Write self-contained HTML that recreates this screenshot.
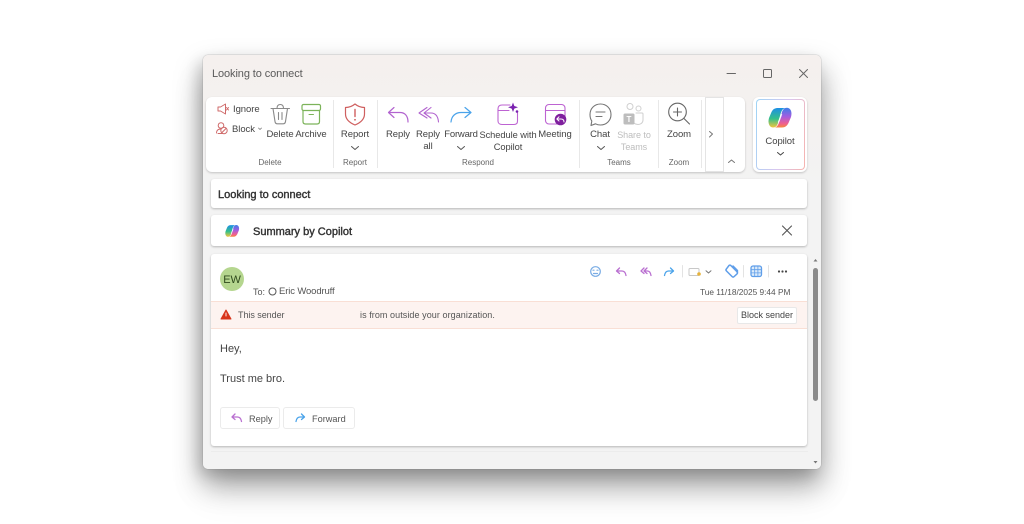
<!DOCTYPE html>
<html><head><meta charset="utf-8"><style>
html,body{margin:0;padding:0;background:#fff}
#p{position:relative;width:1024px;height:524px;overflow:hidden;background:#fff;font-family:"Liberation Sans",sans-serif;color:#3b3b3b;filter:blur(.3px)}
#p div{position:absolute}
.t{white-space:nowrap;font-size:9.5px;line-height:12px;letter-spacing:-.06px;text-align:center;transform:translateX(-50%);color:#444}
.l{white-space:nowrap;color:#444}
.g{white-space:nowrap;font-size:8px;line-height:10px;text-align:center;transform:translateX(-50%);color:#666}
.card{background:#fff;border-radius:3px;box-shadow:0 1px 2px rgba(0,0,0,.25)}
.d{width:1px;background:#e8e8e8;top:100px;height:68px}
.b{font-size:11px;line-height:14px;color:#333;-webkit-text-stroke:.4px #333}
svg{position:absolute;left:0;top:0}
</style></head><body><div id="p">
<div style="left:203px;top:55px;width:618px;height:414px;border-radius:5px;background:linear-gradient(#f5f0ee 0,#f4f1ef 40px,#f3f3f3 130px);box-shadow:0 0 1px #777,0 14px 28px rgba(0,0,0,.34),0 24px 34px rgba(0,0,0,.1),-5px 6px 14px rgba(0,0,0,.12)"></div>
<div class="l" style="left:212px;top:67px;font-size:11px;line-height:14px;letter-spacing:-.1px;color:#5a5a5a">Looking to connect</div>

<div style="left:206px;top:97px;width:539px;height:75px;background:#fff;border-radius:6px;box-shadow:0 1px 2px rgba(0,0,0,.2)"></div>
<div style="left:705px;top:97px;width:17px;height:73px;border:1px solid #e4e4e4"></div>
<div class="d" style="left:333px"></div><div class="d" style="left:377px"></div><div class="d" style="left:579px"></div><div class="d" style="left:658px"></div><div class="d" style="left:701px"></div>

<div style="left:753px;top:97px;width:54px;height:75px;background:#fff;border-radius:6px;box-shadow:0 1px 2px rgba(0,0,0,.2)"></div>
<div style="left:756px;top:99px;width:49px;height:71px;border-radius:4px;background:linear-gradient(100deg,#9ed4f5,#d9c6ef 55%,#f7b3ad);"></div>
<div style="left:757px;top:100px;width:47px;height:69px;border-radius:3px;background:#fff"></div>

<div class="card" style="left:211px;top:179px;width:596px;height:29px"></div>
<div class="card" style="left:211px;top:215px;width:596px;height:31px"></div>
<div class="card" style="left:211px;top:254px;width:596px;height:192px"></div>
<div style="left:211px;top:301px;width:596px;height:26px;background:#fdf3f0;border-top:1px solid #f9dfd5;border-bottom:1px solid #f9dfd5"></div>
<div style="left:211px;top:451px;width:597px;height:1px;background:#ececec"></div>

<div class="l" style="left:233px;top:104px;font-size:9.5px;line-height:12px;letter-spacing:-.06px">Ignore</div>
<div class="l" style="left:232px;top:124px;font-size:9.5px;line-height:12px;letter-spacing:-.06px">Block</div>
<div class="t" style="left:280px;top:129px">Delete</div>
<div class="t" style="left:311px;top:129px">Archive</div>
<div class="t" style="left:355px;top:129px">Report</div>
<div class="t" style="left:398px;top:129px">Reply</div>
<div class="t" style="left:428px;top:129px">Reply<br>all</div>
<div class="t" style="left:461px;top:129px;letter-spacing:-.2px">Forward</div>
<div class="t" style="left:508px;top:129px;font-size:9.3px">Schedule with<br>Copilot</div>
<div class="t" style="left:555px;top:129px">Meeting</div>
<div class="t" style="left:600px;top:129px">Chat</div>
<div class="t" style="left:634px;top:129px;color:#bdbdbd;font-size:9px">Share to<br>Teams</div>
<div class="t" style="left:679px;top:129px">Zoom</div>
<div class="t" style="left:780px;top:136px">Copilot</div>
<div class="g" style="left:270px;top:158px">Delete</div>
<div class="g" style="left:355px;top:158px">Report</div>
<div class="g" style="left:478px;top:158px">Respond</div>
<div class="g" style="left:619px;top:158px">Teams</div>
<div class="g" style="left:679px;top:158px">Zoom</div>

<div class="l b" style="left:218px;top:188px">Looking to connect</div>
<div class="l b" style="left:253px;top:225px">Summary by Copilot</div>

<div style="left:220px;top:267px;width:24px;height:24px;border-radius:50%;background:#b5d68f"></div>
<div class="t" style="left:232px;top:274px;font-size:11px;color:#2f4a1d">EW</div>
<div class="l" style="left:253px;top:286px;font-size:9px;line-height:12px;color:#555">To:</div>
<div class="l" style="left:279px;top:286px;font-size:9.5px;line-height:12px;color:#555;letter-spacing:-.13px">Eric Woodruff</div>
<div class="l" style="left:700px;top:286px;font-size:8.3px;line-height:12px;color:#555">Tue 11/18/2025 9:44 PM</div>
<div class="l" style="left:238px;top:309px;font-size:9px;line-height:12px;color:#555;letter-spacing:-.05px">This sender</div>
<div class="l" style="left:360px;top:309px;font-size:9px;line-height:12px;color:#555;letter-spacing:.07px">is from outside your organization.</div>
<div style="left:737px;top:307px;width:58px;height:15px;background:#fff;border:1px solid #e8e8e8;border-radius:2px;font-size:9px;line-height:15px;text-align:center;color:#444">Block sender</div>

<div class="l" style="left:220px;top:342px;font-size:11px;line-height:14px;color:#444">Hey,</div>
<div class="l" style="left:220px;top:372px;font-size:11px;line-height:14px;color:#444">Trust me bro.</div>

<div style="left:220px;top:407px;width:58px;height:20px;background:#fff;border:1px solid #ebebeb;border-radius:3px"></div>
<div style="left:283px;top:407px;width:70px;height:20px;background:#fff;border:1px solid #ebebeb;border-radius:3px"></div>
<div class="l" style="left:249px;top:413px;font-size:9.2px;line-height:12px;color:#555">Reply</div>
<div class="l" style="left:312px;top:413px;font-size:9.2px;line-height:12px;color:#555">Forward</div>

<div style="left:813px;top:268px;width:5px;height:133px;border-radius:3px;background:#8b8b8b"></div>

<svg width="1024" height="524" viewBox="0 0 1024 524" fill="none" stroke-linecap="round" stroke-linejoin="round">
<defs>
<linearGradient id="c1" x1="0" y1="0" x2="0" y2="1"><stop offset="0" stop-color="#1d8fe6"/><stop offset=".55" stop-color="#35c08a"/><stop offset="1" stop-color="#f4c63c"/></linearGradient>
<linearGradient id="c2" x1="0" y1="0" x2="0" y2="1"><stop offset="0" stop-color="#3b7fe8"/><stop offset=".45" stop-color="#a45ce0"/><stop offset=".8" stop-color="#ef5f8f"/><stop offset="1" stop-color="#f58a3a"/></linearGradient>
<g id="cop"><path d="M10 1H17C14 2 13 5 12 9L10 16C9 19 7.500 20.500 5 20.500C1.500 20.500-.5 16 1 11L3.500 5C5 2 7 1 10 1Z" fill="url(#c1)"/><path d="M14 20.500H7C10 19.500 11 16 12 12L14 5C15 2.500 16.500.8 19 .8C22.500.8 24.500 5 23 10L20.500 16C19 19 17 20.500 14 20.500Z" fill="url(#c2)"/><path d="M13.500 7.500C12.500 10 11.500 13 10.500 15" stroke="#fff" stroke-width="1.300" opacity=".85"/></g>
</defs>
<g stroke="#666" stroke-width="1"><path d="M727 73.500H735.500"/><rect x="763.500" y="69.500" width="8" height="8" rx="1"/><path d="M799.500 69.500L807.500 77.500M807.500 69.500L799.500 77.500"/></g>
<g stroke="#cf6a6a" stroke-width="1"><path d="M218 107H220.500L225.500 104V114L220.500 111H218Z"/><path d="M226.500 107.500L228.500 110M228.500 107.500L226.500 110"/></g>
<g stroke="#cf6a6a" stroke-width="1"><circle cx="221" cy="125.500" r="2.800"/><path d="M216.500 133C216.500 130 218.500 129 221 129"/><circle cx="224" cy="130.500" r="3.200"/><path d="M222 132.500L226 128.500"/><path d="M218 133.500H222"/></g>
<path d="M258.500 128L260 129.500L261.500 128" stroke="#777" stroke-width=".8"/>
<g stroke="#8a8a8a" stroke-width="1.100"><path d="M271 108.500H289.500"/><path d="M277 108.500C277 106 278 104.500 280.300 104.500C282.500 104.500 283.500 106 283.500 108.500"/><path d="M273 108.500L275 121.500C275.200 123 276 123.800 277.500 123.800H283C284.500 123.800 285.300 123 285.500 121.500L287.500 108.500"/><path d="M278.500 112.500V119.500M282 112.500V119.500"/></g>
<g stroke="#7cb35a" stroke-width="1.200"><rect x="302" y="104.500" width="18.500" height="6" rx="1.500"/><path d="M303 110.500V121.500C303 123 304 124 305.500 124H317C318.500 124 319.500 123 319.500 121.500V110.500"/><path d="M309 114.500H313.500" stroke-width="1"/></g>
<g stroke="#cf5f5f" stroke-width="1.200"><path d="M355 104C358 106.500 361 107.500 364.500 107.500V114C364.500 119 361 122.500 355 125C349 122.500 345.500 119 345.500 114V107.500C349 107.500 352 106.500 355 104Z"/><path d="M355 109.500V116.500" stroke-width="1.400"/></g><circle cx="355" cy="119.800" r=".9" fill="#cf5f5f"/>
<path d="M351.500 146.500L355 149.500L358.500 146.500" stroke="#555"/>
<g stroke="#b264cf" stroke-width="1.200"><path d="M394 107.500L388.500 112.500L394 117.500"/><path d="M389 112.500H400C405 112.500 408 116 408 122"/></g>
<g stroke="#b264cf" stroke-width="1.100"><path d="M427 107.500L419 113L427 118"/><path d="M431 107.500L424 113L431 118"/><path d="M424.500 113H431C435.500 113 438 116.500 438.500 122"/></g>
<g stroke="#4aa3ea" stroke-width="1.200"><path d="M465 107.500L471 112.500L465 117.500"/><path d="M470.500 112.500H461C455.500 112.500 451.500 116 451 122"/></g>
<path d="M457.500 146.500L461 149.500L464.500 146.500" stroke="#555"/>
<g stroke="#bd63d2" stroke-width="1.100"><path d="M510 105H502C499.500 105 498 106.500 498 109V121C498 123 499.500 124.500 502 124.500H514C516.500 124.500 517.500 123 517.500 121V113"/><path d="M498 110.500H509"/></g>
<path d="M513 102.500L514.300 106L518 107.300L514.300 108.600L513 112L511.700 108.600L508 107.300L511.700 106Z" fill="#7a22b0"/><circle cx="517" cy="111.500" r="1.300" fill="#7a22b0"/>
<g stroke="#bd63d2" stroke-width="1.100"><rect x="545.500" y="104.500" width="19.500" height="19.500" rx="3.500"/><path d="M545.500 110.500H565"/></g>
<circle cx="560.500" cy="119.500" r="5.800" fill="#7f1f9e"/><path d="M559 116.800L556.800 119L559 121M557 119H561C563 119 564 120 564 122" stroke="#fff" stroke-width="1"/>
<g stroke="#777" stroke-width="1.100"><path d="M600.500 104C606.500 104 611 108.500 611 114.500C611 120.500 606.500 125 600.500 125C598.500 125 597 124.600 595.500 123.800L591 125.500L591.800 121C590.500 119.200 590 117 590 114.500C590 108.500 594.500 104 600.500 104Z"/><path d="M596 112H605M596 116.500H602"/></g>
<path d="M597.500 146.500L601 149.500L604.500 146.500" stroke="#555"/>
<g stroke="#cfcfcf" stroke-width="1"><circle cx="630" cy="106.500" r="3"/><circle cx="638.500" cy="108.500" r="2.500"/><path d="M636 113H642C642.800 113 643 113.500 643 114V120C643 123 640.500 124.500 638 124.500C636 124.500 635 124 634 123"/></g>
<rect x="623.500" y="113.500" width="11" height="11" rx="1.500" fill="#bdbdbd"/><text x="629" y="122" font-family="Liberation Sans" font-size="8" font-weight="bold" fill="#fff" text-anchor="middle">T</text>
<g stroke="#666" stroke-width="1.100"><circle cx="677.500" cy="112" r="8.800"/><path d="M684 118.500L689.500 124M677.500 108V116M673.500 112H681.500"/></g>
<path d="M709.500 131.500L712.500 134L709.500 137" stroke="#777"/>
<path d="M728.500 162.500L731.500 160L734.500 162.500" stroke="#777"/>
<use href="#cop" transform="translate(768,107)"/>
<path d="M777.500 152.500L780.500 155L783.500 152.500" stroke="#444"/>
<use href="#cop" transform="translate(225,224.500) scale(.6)"/>
<path d="M782.500 226L791.500 235M791.500 226L782.500 235" stroke="#555" stroke-width="1.100"/>
<circle cx="272.500" cy="291.500" r="3.500" stroke="#555"/>
<path d="M226 310L231 319H221Z" fill="#d8341a" stroke="#d8341a" stroke-width="1"/><path d="M226 313V316" stroke="#fff" stroke-width=".9"/>
<g stroke="#79ace4" stroke-width="1.200"><circle cx="595.500" cy="271.500" r="4.800"/><path d="M593 270.200H594M597 270.200H598M593.500 273.500H597.500"/></g>
<g stroke="#b96fd0" stroke-width="1.300"><path d="M619.500 268L616.500 271L619.500 273.500M617 271H622C624 271 625.500 272.500 626 275.500"/></g>
<g stroke="#b96fd0" stroke-width="1.300"><path d="M644 268L641 271L644 273.500M647 268L644 271L647 273.500M644 271H647.500C649.500 271 650.500 272.500 651 275.500"/></g>
<g stroke="#4aa3ea" stroke-width="1.300"><path d="M670.500 268L673.500 271L670.500 273.500M673 271H668.500C666.500 271 665 272.500 664.500 275.500"/></g>
<path d="M682.500 265.500V277" stroke="#e3e3e3"/>
<rect x="689" y="268.500" width="10" height="7" rx="1" stroke="#c8c8c8"/><circle cx="699" cy="274" r="1.800" fill="#e6b23a"/>
<path d="M706 270.800L708.500 273L711 270.800" stroke="#777"/>
<g stroke="#5f9ee9" stroke-width="1.500"><path d="M729.800 266L736 272.200C736.700 272.900 736.700 273.700 736 274.400L733.200 277C732.500 277.700 731.700 277.700 731 277L725.500 271.500C724.800 270.800 724.800 270 725.500 269.300L728 266C728.600 265.500 729.200 265.500 729.800 266Z" transform="translate(1,-.5)"/><path d="M733 266L737 270C737.800 270.800 737.500 271.500 737 272"/></g>
<path d="M743.500 265.500V277" stroke="#e3e3e3"/>
<rect x="751" y="266" width="10.500" height="10.500" rx="2" stroke="#5f9ee9" stroke-width="1.300" fill="#dcebfa"/><path d="M754.700 266.500V276M757.900 266.500V276M751.500 269.700H761M751.500 272.900H761" stroke="#5f9ee9" stroke-width=".8"/>
<path d="M768.500 265.500V277" stroke="#e3e3e3"/>
<g fill="#444"><circle cx="779" cy="271.500" r="1.100"/><circle cx="782.500" cy="271.500" r="1.100"/><circle cx="786" cy="271.500" r="1.100"/></g>
<g stroke="#b96fd0" stroke-width="1.300"><path d="M235 414L232 417L235 419.500M232.500 417H237.500C239.500 417 241 418.500 241.500 421.500"/></g>
<g stroke="#4aa3ea" stroke-width="1.300"><path d="M301.500 414L304.500 417L301.500 419.500M304 417H300C298 417 296.500 418.500 296 421.500"/></g>
<path d="M813.500 261.500H817.500L815.500 259Z" fill="#777"/><path d="M813.500 461H817.500L815.500 463.500Z" fill="#777"/>
</svg>
</div></body></html>
